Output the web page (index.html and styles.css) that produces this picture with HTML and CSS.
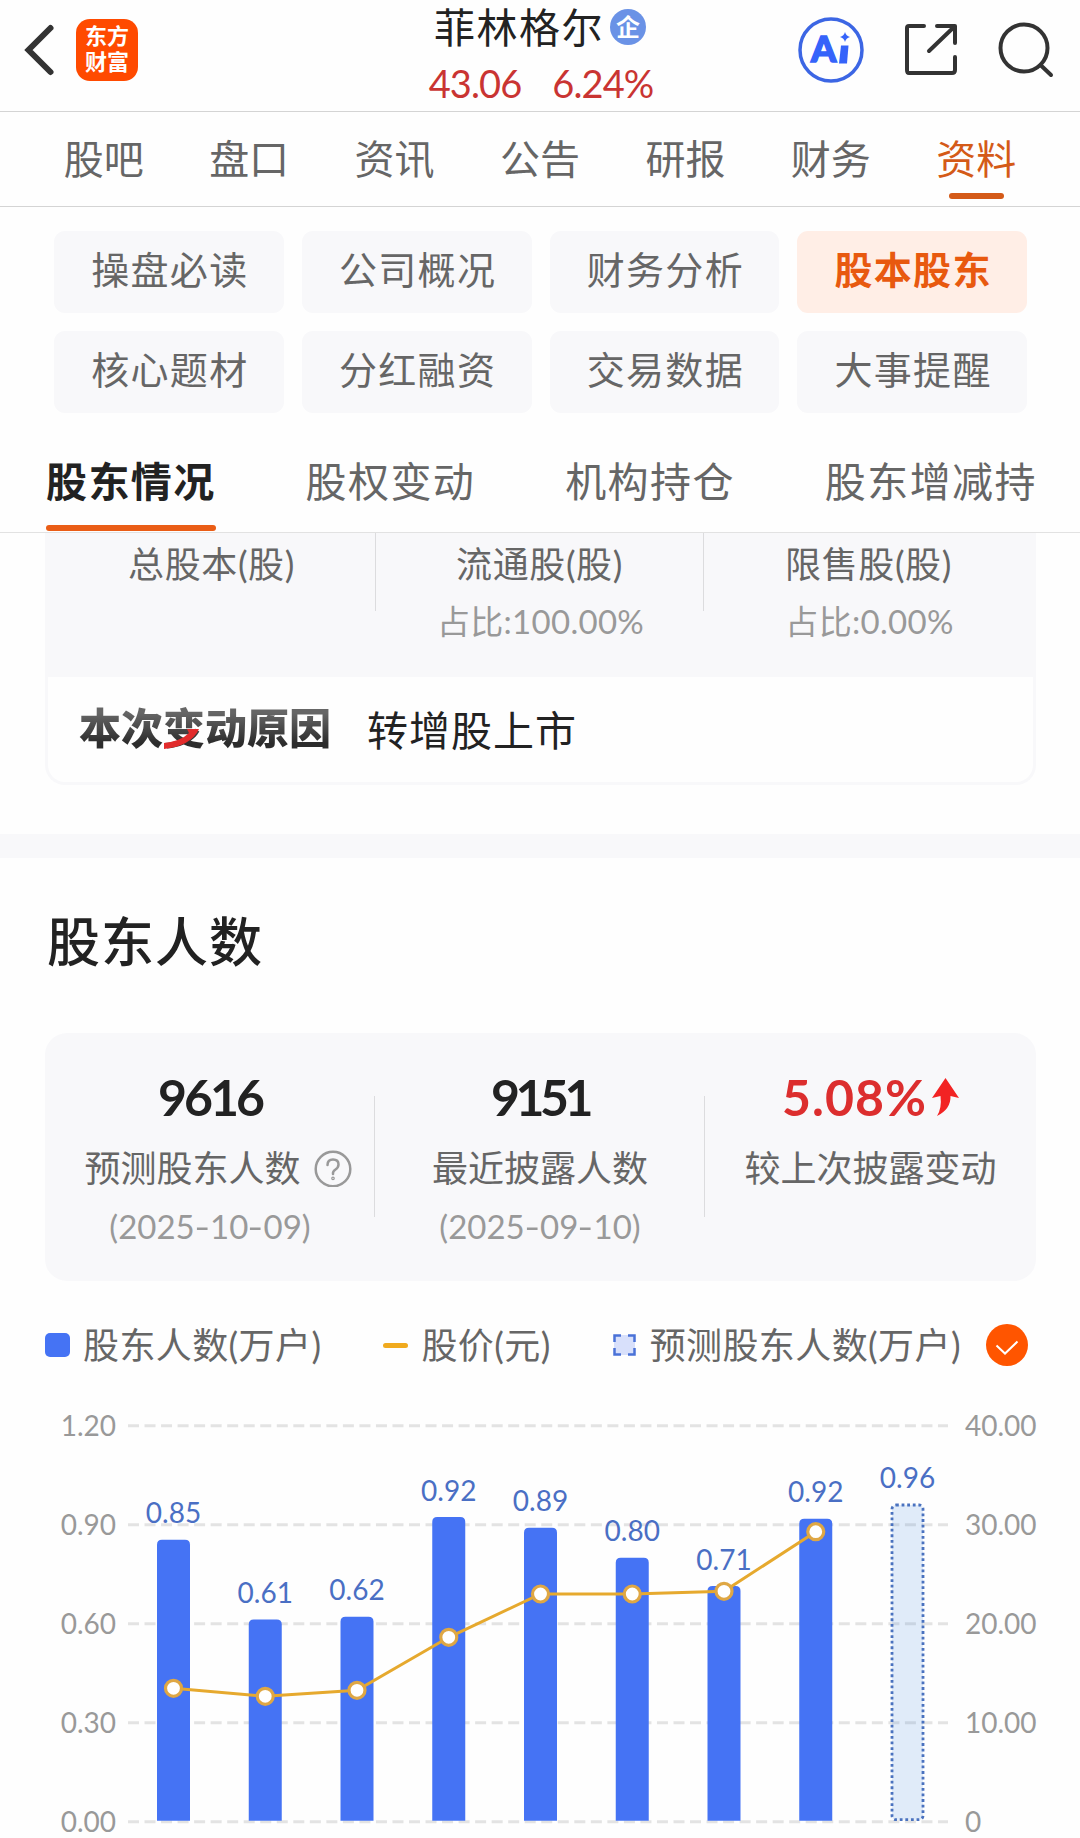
FILE: index.html
```html
<!DOCTYPE html>
<html lang="zh-CN">
<head>
    <meta charset="UTF-8">
    <meta name="viewport" content="width=device-width, initial-scale=1.0">
    <title>菲林格尔 - 股东人数</title>
    <link rel="stylesheet" href="styles.css">
</head>
<body>
    <header class="header">
        <div class="header-left">
            <svg class="back" width="36" height="54" viewBox="0 0 36 54" fill="none" stroke="#333" stroke-width="6" stroke-linecap="round" stroke-linejoin="miter">
                <path d="M29.500 5L7.500 27L29.500 49"/>
            </svg>
            <div class="logo"><span>东方</span><span>财富</span></div>
        </div>
        <div class="stock">
            <div class="stock-name">菲林格尔<span class="badge">企</span></div>
            <div class="stock-price"><span>43.06</span><span>6.24%</span></div>
        </div>
        <div class="header-right">
            <svg width="66" height="66" viewBox="0 0 66 66">
                <circle cx="33" cy="33" r="31" fill="none" stroke="#3c66e4" stroke-width="3.500"/>
                <text class="ai-text" x="13" y="45">A</text>
                <path d="M43 28.500h7.500l-1.500 18h-8z" fill="#3563fa"/>
                <path d="M47 15q1 4 5 5q-4 1-5 5q-1-4-5-5q4-1 5-5z" fill="#3563fa"/>
            </svg>
            <svg width="54" height="54" viewBox="0 0 54 54" fill="none" stroke="#333" stroke-width="4" stroke-linecap="round" stroke-linejoin="round">
                <path d="M20 3H5q-2 0-2 2V47q0 3 2 3H48q3 0 3-3V34M33 3H51V20M50 4L25 28"/>
            </svg>
            <svg width="56" height="56" viewBox="0 0 56 56" fill="none" stroke="#333" stroke-width="4" stroke-linecap="round">
                <circle cx="26" cy="26" r="23.500"/>
                <path d="M42.500 43L53 53"/>
            </svg>
        </div>
    </header>

    <nav class="nav">
        <a>股吧</a>
        <a>盘口</a>
        <a>资讯</a>
        <a>公告</a>
        <a>研报</a>
        <a>财务</a>
        <a class="active">资料</a>
    </nav>

    <div class="chips">
        <a>操盘必读</a>
        <a>公司概况</a>
        <a>财务分析</a>
        <a class="active">股本股东</a>
        <a>核心题材</a>
        <a>分红融资</a>
        <a>交易数据</a>
        <a>大事提醒</a>
    </div>

    <div class="tabs">
        <a class="active">股东情况</a>
        <a>股权变动</a>
        <a>机构持仓</a>
        <a>股东增减持</a>
    </div>

    <section class="capital">
        <div class="capital-row">
            <div class="capital-cell"><p>总股本(股)</p></div>
            <div class="capital-cell"><p>流通股(股)</p><small>占比:100.00%</small></div>
            <div class="capital-cell"><p>限售股(股)</p><small>占比:0.00%</small></div>
        </div>
        <div class="reason">
            <div class="reason-title">
                <span>本次变动原因</span>
                <svg class="slash" width="38" height="22" viewBox="0 0 38 22">
                    <path d="M24 1H36Q28 18 1 21V15Q18 13 26 5z" fill="#e22b2b"/>
                </svg>
            </div>
            <div class="reason-text">转增股上市</div>
        </div>
    </section>

    <div class="divider"></div>

    <section class="holders">
        <h2>股东人数</h2>
        <div class="summary">
            <div class="summary-cell">
                <strong>9616</strong>
                <p>预测股东人数
                    <svg width="38" height="38" viewBox="0 0 38 38" fill="none" stroke="#999" stroke-width="2.500" stroke-linecap="round">
                        <circle cx="19" cy="20" r="17.300"/>
                        <path d="M13.500 16q0-5.500 5.500-5.500t5.500 5q0 3-3 5t-2.500 4.500"/>
                        <circle cx="19" cy="29.300" r=".6"/>
                    </svg>
                </p>
                <small>(2025<b>-</b>10<b>-</b>09)</small>
            </div>
            <div class="summary-cell">
                <strong>9151</strong>
                <p>最近披露人数</p>
                <small>(2025<b>-</b>09<b>-</b>10)</small>
            </div>
            <div class="summary-cell">
                <strong class="up">5.08%<svg width="27" height="38" viewBox="0 0 27 38"><path d="M13.500 0L27 20L18.500 18Q19 31 5 38Q10 30 8.500 18L0 20z" fill="#f22323"/></svg></strong>
                <p>较上次披露变动</p>
            </div>
        </div>

        <div class="legend">
            <div class="legend-item"><i class="mark-bar"></i><span>股东人数(万户)</span></div>
            <div class="legend-item"><i class="mark-line"></i><span>股价(元)</span></div>
            <div class="legend-item">
                <svg class="mark-dash" width="23" height="22" viewBox="0 0 23 22">
                    <rect x="1" y="1" width="21" height="20" fill="#d8e0fb"/>
                    <path d="M1.500 8V1.500H8M15 1.500H21.500V8M21.500 14V20.500H15M8 20.500H1.500V14" fill="none" stroke="#4a72d8" stroke-width="2.500"/>
                </svg>
                <span>预测股东人数(万户)</span>
            </div>
            <svg class="check" width="42" height="42" viewBox="0 0 42 42">
                <circle cx="21" cy="21" r="21" fill="#ff5500"/>
                <path d="M10.500 21.500L19 29.500L31.500 17.500" fill="none" stroke="#fff" stroke-width="2"/>
            </svg>
        </div>

        <svg class="chart" id="chart" width="1080" height="448" viewBox="0 1390 1080 448"></svg>
    </section>

    <script>
        // top / price are y positions on the chart
        const bars = [
            { label: '0.85', top: 1539.7, price: 1688.3 },
            { label: '0.61', top: 1619.5, price: 1696.3 },
            { label: '0.62', top: 1616.7, price: 1690.3 },
            { label: '0.92', top: 1517, price: 1637.3 },
            { label: '0.89', top: 1527.7, price: 1594 },
            { label: '0.80', top: 1557.7, price: 1594 },
            { label: '0.71', top: 1586, price: 1591.3 },
            { label: '0.92', top: 1518.7, price: 1531.7 },
            { label: '0.96', top: 1504, forecast: true }
        ];
        const leftAxis = ['1.20', '0.90', '0.60', '0.30', '0.00'];
        const rightAxis = ['40.00', '30.00', '20.00', '10.00', '0'];
        const bottom = 1820.7;
        let svg = '';

        leftAxis.forEach((text, i) => {
            const y = 1425.7 + i * 99;
            svg += `<line class="grid" x1="128" y1="${y}" x2="948" y2="${y}"/>`;
            svg += `<text class="axis" x="116" y="${y + 10}" text-anchor="end">${text}</text>`;
            svg += `<text class="axis" x="965" y="${y + 10}">${rightAxis[i]}</text>`;
        });

        const points = [];
        bars.forEach((bar, i) => {
            const x = 173.5 + i * 91.75;
            const h = bottom - bar.top;
            if (bar.forecast) {
                svg += `<rect class="forecast" x="${x - 15.5}" y="${bar.top + 1}" width="31" height="${h - 2}" rx="4"/>`;
            } else {
                svg += `<path class="bar" d="M${x - 16.5} ${bottom}V${bar.top + 5}q0-5 5-5h23q5 0 5 5V${bottom}z"/>`;
                points.push([x, bar.price]);
            }
            svg += `<text class="value" x="${x}" y="${bar.top - 16.5}" text-anchor="middle">${bar.label}</text>`;
        });

        svg += `<polyline class="price" points="${points.join(' ')}"/>`;
        points.forEach(([x, y]) => {
            svg += `<circle class="dot" cx="${x}" cy="${y}" r="8"/>`;
        });
        document.getElementById('chart').innerHTML = svg;
    </script>
</body>
</html>
```
FILE: styles.css
```css
* {
    box-sizing: border-box;
}
body {
    margin: 0;
    width: 1080px;
    height: 1838px;
    overflow: hidden;
    background-color: #fefefe;
    font-family: Lato, "Noto Sans CJK SC", sans-serif;
    color: #666;
}
p, h2 {
    margin: 0;
}
svg {
    display: block;
    flex-shrink: 0;
}
.header {
    display: grid;
    grid-template-columns: 1fr auto 1fr;
    height: 112px;
    border-bottom: 1px solid #d4d4d4;
}
.header-left {
    display: flex;
    align-items: flex-start;
    gap: 19px;
    padding: 19px 0 0 21px;
}
.back {
    margin-top: 4px;
}
.logo {
    display: flex;
    flex-direction: column;
    justify-content: center;
    align-items: center;
    width: 62px;
    height: 62px;
    padding-bottom: 2px;
    border-radius: 14px;
    background-color: #ff4a00;
    color: #fff;
    font-size: 22px;
    font-weight: 700;
    line-height: 26px;
}
.stock {
    display: flex;
    flex-direction: column;
    align-items: center;
}
.stock-name {
    display: flex;
    align-items: center;
    height: 55px;
    padding-bottom: 5px;
    color: #222;
    font-size: 41px;
    letter-spacing: 1.5px;
}
.badge {
    width: 36px;
    height: 36px;
    margin: 3px 0 0 6px;
    border-radius: 50%;
    background-color: #6a92e6;
    color: #fff;
    font-size: 24px;
    font-weight: 700;
    line-height: 35px;
    text-align: center;
    letter-spacing: 0;
}
.stock-price {
    display: flex;
    gap: 31px;
    padding-left: 2px;
    color: #c93432;
    font-size: 38px;
    line-height: 56px;
    letter-spacing: -0.9px;
}
.header-right {
    display: flex;
    justify-content: flex-end;
    align-items: center;
    gap: 40px;
    padding: 0 26px 12px 0;
}
.ai-text {
    font-family: Lato, sans-serif;
    font-size: 36px;
    font-weight: 900;
    fill: #3563fa;
    stroke: #3563fa;
    stroke-width: 1.5px;
}
.nav {
    display: grid;
    grid-template-columns: repeat(7, 1fr);
    height: 95px;
    padding: 0 31px;
    border-bottom: 1px solid #d4d4d4;
}
.nav a {
    display: flex;
    flex-direction: column;
    align-items: center;
    padding-top: 18px;
    font-size: 40px;
    line-height: 58px;
}
.nav .active {
    color: #d45a18;
}
.nav .active::after {
    content: "";
    width: 55px;
    height: 6px;
    margin-top: 5px;
    border-radius: 3px;
    background-color: #d45a18;
}
.chips {
    display: grid;
    grid-template-columns: repeat(4, 1fr);
    gap: 18px;
    padding: 24px 53px 0 54px;
}
.chips a {
    height: 82px;
    padding-left: 2px;
    border-radius: 11px;
    background-color: #f8f8fa;
    font-size: 38px;
    letter-spacing: 1.3px;
    line-height: 76px;
    text-align: center;
}
.chips .active {
    background-color: #ffeee6;
    color: #e8590f;
    font-weight: 700;
}
.tabs {
    display: flex;
    gap: 90px;
    height: 120px;
    padding: 40px 0 0 46px;
    border-bottom: 1px solid #e2e2e2;
    white-space: nowrap;
}
.tabs a {
    font-size: 41px;
    letter-spacing: 1.4px;
    line-height: 58px;
}
.tabs .active {
    color: #222;
    font-weight: 700;
}
.tabs .active::after {
    content: "";
    display: block;
    height: 6px;
    margin-top: 14px;
    border-radius: 3px;
    background-color: #ea5d16;
}
.capital {
    margin: 0 44px 49px 45px;
    border: 3px solid #f8f8fa;
    border-top: none;
    border-radius: 0 0 20px 20px;
}
.capital-row {
    display: grid;
    grid-template-columns: 327px 328px 1fr;
    height: 144px;
    background-color: #f8f8fa;
    text-align: center;
}
.capital-cell + .capital-cell {
    border-left: 1px solid #dcdcde;
    height: 78px;
}
.capital-cell p {
    padding-top: 3px;
    font-size: 36px;
    letter-spacing: 0.6px;
    line-height: 56px;
}
.capital-cell small {
    display: block;
    padding-left: 2px;
    color: #999;
    font-size: 33px;
    letter-spacing: 0.3px;
    line-height: 58px;
}
.reason {
    display: flex;
    align-items: center;
    gap: 36px;
    height: 105px;
    padding: 0 0 3px 31px;
}
.reason-title {
    position: relative;
    font-size: 42px;
    font-weight: 900;
    line-height: 58px;
}
.reason-title span {
    background: linear-gradient(#666 20%, #2c2c2c 80%);
    -webkit-background-clip: text;
    background-clip: text;
    color: transparent;
}
.slash {
    position: absolute;
    left: 84px;
    top: 29px;
}
.reason-text {
    color: #222;
    font-size: 41px;
    letter-spacing: 1px;
}
.divider {
    height: 24px;
    background-color: #f8f8fa;
}
.holders h2 {
    padding: 46px 0 0 47px;
    color: #222;
    font-size: 53px;
    font-weight: 500;
    letter-spacing: 1px;
    line-height: 76px;
}
.summary {
    display: grid;
    grid-template-columns: 330px 330px 1fr;
    height: 248px;
    margin: 53px 44px 0 45px;
    border-radius: 22px;
    background-color: #f8f8fa;
}
.summary-cell {
    display: flex;
    flex-direction: column;
    align-items: center;
    padding-top: 34px;
    background: linear-gradient(#dcdcde, #dcdcde) no-repeat right 63px / 1px 121px;
}
.summary-cell:last-child {
    background: none;
}
.summary-cell strong {
    display: flex;
    align-items: center;
    color: #222;
    font-size: 50px;
    font-weight: 700;
    letter-spacing: -3px;
    line-height: 60px;
}
.summary-cell:nth-child(2) strong {
    letter-spacing: -4.5px;
}
.summary-cell .up {
    gap: 5px;
    color: #dc2e2e;
    letter-spacing: 1px;
}
.summary-cell p {
    display: flex;
    align-items: center;
    gap: 13px;
    padding-top: 13px;
    font-size: 36px;
    line-height: 56px;
    white-space: nowrap;
}
.summary-cell:first-child p {
    padding-left: 16px;
}
.summary-cell small {
    color: #999;
    font-size: 33px;
    line-height: 60px;
}
/* wider dash in the dates */
.summary-cell b {
    display: inline-block;
    margin: 0 2px 0 1px;
    font-weight: 400;
    transform: scaleX(1.3);
}
.legend {
    display: flex;
    align-items: center;
    height: 60px;
    margin: 34px 0 15px 45px;
    font-size: 36px;
    letter-spacing: 0.4px;
}
.legend-item {
    display: flex;
    align-items: center;
    white-space: nowrap;
}
.legend-item span {
    padding-bottom: 5px;
}
.legend-item + .legend-item {
    margin-left: 62px;
}
.mark-bar {
    width: 25px;
    height: 24px;
    margin-right: 13px;
    border-radius: 5px;
    background-color: #4573f4;
}
.mark-line {
    width: 25px;
    height: 5px;
    margin-right: 13px;
    border-radius: 3px;
    background-color: #f0aa1e;
}
.mark-dash {
    margin-right: 14px;
}
.check {
    margin-left: 25px;
}
.grid {
    stroke: #e3e3e3;
    stroke-width: 3;
    stroke-dasharray: 11 5.53;
}
.axis {
    fill: #999;
    font-size: 28px;
}
.bar {
    fill: #4573f4;
}
.forecast {
    fill: rgba(66, 136, 226, 0.16);
    stroke: #4a72bf;
    stroke-width: 2.8;
    stroke-dasharray: 2.8 2.8;
}
.value {
    fill: #4a6fc4;
    font-size: 28px;
}
.price {
    fill: none;
    stroke: #e6a92e;
    stroke-width: 3;
}
.dot {
    fill: #fff;
    stroke: #dfa744;
    stroke-width: 3.2;
}
```
